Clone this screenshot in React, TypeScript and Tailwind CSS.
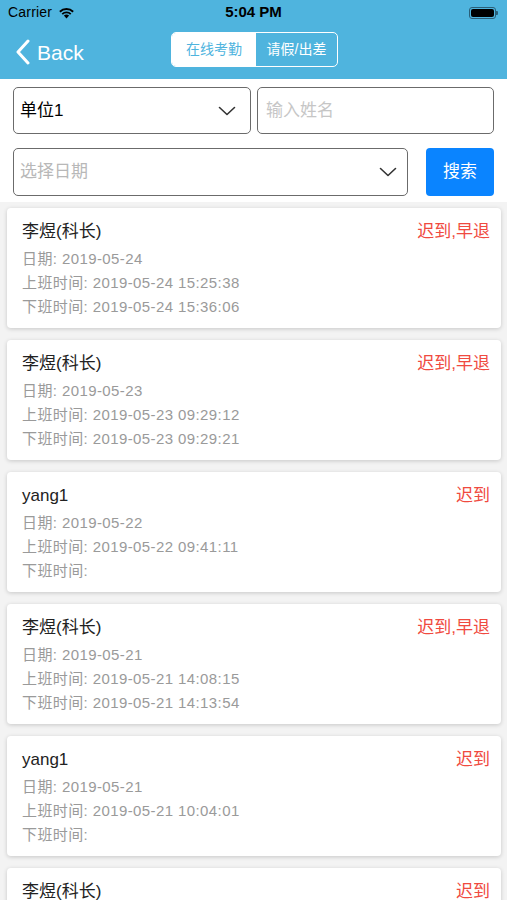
import React from "react";

const font = { fontFamily: '"Liberation Sans", "Noto Sans CJK SC", sans-serif' };

type Rec = { name: string; date: string; on: string; off: string; status: string };

const records: Rec[] = [
  { name: "李煜(科长)", date: "2019-05-24", on: "2019-05-24 15:25:38", off: "2019-05-24 15:36:06", status: "迟到,早退" },
  { name: "李煜(科长)", date: "2019-05-23", on: "2019-05-23 09:29:12", off: "2019-05-23 09:29:21", status: "迟到,早退" },
  { name: "yang1", date: "2019-05-22", on: "2019-05-22 09:41:11", off: "", status: "迟到" },
  { name: "李煜(科长)", date: "2019-05-21", on: "2019-05-21 14:08:15", off: "2019-05-21 14:13:54", status: "迟到,早退" },
  { name: "yang1", date: "2019-05-21", on: "2019-05-21 10:04:01", off: "", status: "迟到" },
  { name: "李煜(科长)", date: "2019-05-20", on: "2019-05-20 09:12:33", off: "", status: "迟到" },
];

function Chevron() {
  return (
    <svg width="18" height="10" viewBox="0 0 18 10" fill="none">
      <path d="M1.5 1.5 L9 8.5 L16.5 1.5" stroke="#333" strokeWidth="1.6" strokeLinecap="round" strokeLinejoin="round" />
    </svg>
  );
}

export default function App() {
  return (
    <div className="w-[507px] h-[900px] overflow-hidden bg-[#f3f3f3]" style={font}>
      {/* Header */}
      <div className="bg-[#4fb4de] h-[79px] flex flex-col">
        <div className="h-[25px] flex items-center px-[8px] relative">
          <span className="text-[14px] font-medium text-black tracking-[0.2px]">Carrier</span>
          <svg className="ml-[6px]" width="17" height="12" viewBox="0 0 17 12">
            <path d="M8.5 11.5 L5.9 8.6 A3.8 3.8 0 0 1 11.1 8.6 Z" fill="#000" />
            <path d="M3.6 6.4 A7 7 0 0 1 13.4 6.4 L12.1 7.8 A5.2 5.2 0 0 0 4.9 7.8 Z" fill="#000" />
            <path d="M1.2 4 A10.4 10.4 0 0 1 15.8 4 L14.5 5.4 A8.5 8.5 0 0 0 2.5 5.4 Z" fill="#000" />
          </svg>
          <span className="absolute left-0 right-0 text-center text-[15px] font-bold text-black pointer-events-none">5:04 PM</span>
          <div className="ml-auto mr-[1px] flex items-center">
            <div className="w-[27px] h-[12px] rounded-[3px] border border-[#2a5f78] p-[1px]">
              <div className="w-full h-full bg-black rounded-[2px]" />
            </div>
            <div className="w-[2px] h-[4px] bg-[#2a5f78] rounded-r-[1px]" />
          </div>
        </div>
        <div className="h-[54px] flex items-center relative">
          <div className="flex items-center pl-[15px]">
            <svg width="16" height="26" viewBox="0 0 16 26" fill="none">
              <path d="M13 2 L3 13 L13 24" stroke="#fff" strokeWidth="3" strokeLinecap="round" strokeLinejoin="round" />
            </svg>
            <span className="ml-[6px] text-white text-[21px] leading-none">Back</span>
          </div>
          <div className="absolute left-[171px] top-[7px] w-[167px] h-[35px] border border-white rounded-[5px] flex overflow-hidden">
            <div className="w-[84px] bg-white flex items-center justify-center text-[14px] text-[#4fb4de]">在线考勤</div>
            <div className="flex-1 flex items-center justify-center text-[14px] text-white">请假/出差</div>
          </div>
        </div>
      </div>

      {/* Filters */}
      <div className="bg-white px-[13px] pt-[8px] pb-[6px] flex flex-col gap-[14px]">
        <div className="flex gap-[6px]">
          <div className="w-[238px] h-[47px] border-[1.5px] border-[#6b6b6b] rounded-[5px] flex items-center pl-[6px] pr-[14px]">
            <span className="text-[17px] text-black">单位1</span>
            <span className="ml-auto"><Chevron /></span>
          </div>
          <div className="flex-1 h-[47px] border-[1.5px] border-[#6b6b6b] rounded-[5px] flex items-center pl-[8px]">
            <span className="text-[17px] text-[#c6c6c6]">输入姓名</span>
          </div>
        </div>
        <div className="flex items-center">
          <div className="w-[395px] h-[48px] border-[1.5px] border-[#6b6b6b] rounded-[5px] flex items-center pl-[6px] pr-[10px]">
            <span className="text-[17px] text-[#b8b8b8]">选择日期</span>
            <span className="ml-auto"><Chevron /></span>
          </div>
          <div className="ml-auto w-[68px] h-[48px] bg-[#0a84ff] rounded-[4px] flex items-center justify-center text-white text-[17px]">搜索</div>
        </div>
      </div>

      {/* List */}
      <div className="px-[7px] pt-[6px] flex flex-col gap-[12px]">
        {records.map((r, i) => (
          <div key={i} className="w-[494px] h-[120px] shrink-0 bg-white rounded-[4px] shadow-[0_1px_4px_rgba(0,0,0,0.18)] pl-[15px] pr-[11px] pt-[13px]">
            <div className="flex items-center h-[22px]">
              <span className="text-[17px] text-[#222]">{r.name}</span>
              <span className="ml-auto text-[17px] text-[#f04a40]">{r.status}</span>
            </div>
            <div className="mt-[4px] text-[15px] tracking-[0.4px] text-[#9a9a9a]">
              <div className="h-[24px] flex items-center">日期: {r.date}</div>
              <div className="h-[24px] flex items-center">上班时间: {r.on}</div>
              <div className="h-[24px] flex items-center">下班时间: {r.off}</div>
            </div>
          </div>
        ))}
      </div>
    </div>
  );
}
